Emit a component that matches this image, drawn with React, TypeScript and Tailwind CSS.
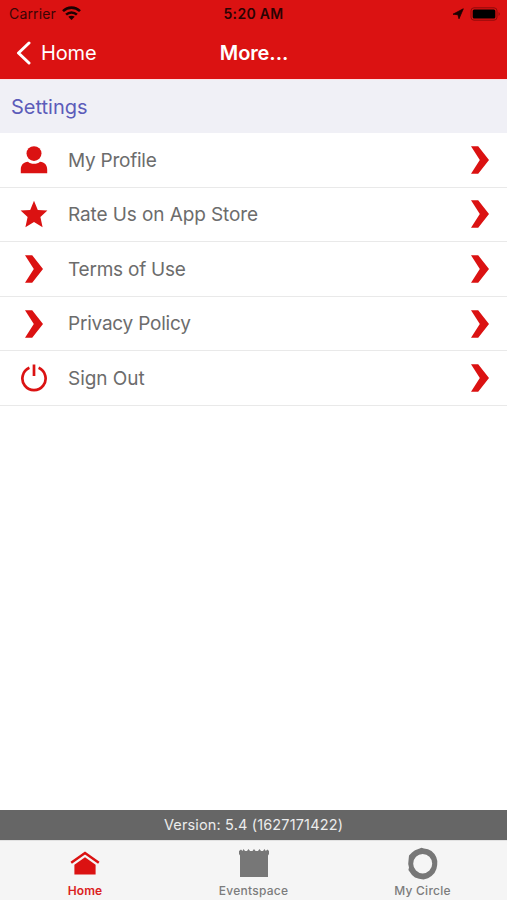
import type { ReactNode } from 'react';

interface SettingItem {
    label: string;
    icon: ReactNode;
    // letter spacing differs a little between the labels
    tracking: string;
}

const ChevronIcon = () => (
    <svg width="18" height="28" viewBox="0 0 18 28" fill="#db1212">
        <path d="M0 0.3H7.2L18 14L7.2 27.7H0L8.8 14Z" />
    </svg>
);

const UserIcon = () => (
    <svg width="28" height="28" viewBox="0 0 28 28" fill="#db1212">
        <ellipse cx="14" cy="7.6" rx="7.5" ry="7.4" />
        <path d="M0.8 27.2V23.5C0.8 19 3.4 16.2 8 15.8C9.6 17.2 11.4 17.8 14 17.8C16.6 17.8 18.4 17.2 20 15.8C24.6 16.2 27.2 19 27.2 23.5V27.2Z" />
    </svg>
);

const StarIcon = () => (
    <svg width="28" height="28" viewBox="0 0 28 28" fill="#db1212">
        <path d="M14 0.8L17.8 10L27.4 10.6L20.4 17.1L22.6 27.2L14 22.1L5.4 27.2L7.6 17.1L0.6 10.6L10.2 10Z" />
    </svg>
);

const PowerIcon = () => (
    <svg width="28" height="28" viewBox="0 0 28 28" fill="none" stroke="#db1212" strokeWidth="2.7">
        <path d="M9.4 3.8A11.6 11.6 0 1 0 18.6 3.8" />
        <path d="M14 0.5V12" />
    </svg>
);

const items: SettingItem[] = [
    { label: 'My Profile', icon: <UserIcon />, tracking: 'tracking-[-0.25px]' },
    { label: 'Rate Us on App Store', icon: <StarIcon />, tracking: 'tracking-[-0.1px]' },
    { label: 'Terms of Use', icon: <ChevronIcon />, tracking: 'tracking-[-0.22px]' },
    { label: 'Privacy Policy', icon: <ChevronIcon />, tracking: 'tracking-[-0.22px]' },
    { label: 'Sign Out', icon: <PowerIcon />, tracking: 'tracking-[-0.05px]' },
];

function StatusBar() {
    return (
        <div className="grid h-[27px] grid-cols-3 items-center px-[9px] text-[#3a0505]">
            <div className="flex items-center gap-[6px] text-[14px] tracking-[0.15px]">
                <span>Carrier</span>
                <svg className="-mt-px" width="19" height="14" viewBox="0 0 19 14" fill="none" stroke="#1c0202" strokeWidth="2.6">
                    <path d="M1 5.1C5.8 0.5 13.2 0.5 18 5.1" />
                    <path d="M4.1 8.6C7.2 5.7 11.8 5.7 14.9 8.6" />
                    <path d="M6.3 10.8C8.1 9.3 10.9 9.3 12.7 10.8L9.5 14Z" fill="#1c0202" stroke="none" />
                </svg>
            </div>
            <div className="text-center text-[14px] font-semibold tracking-[0.3px] text-[#2a0303]">5:20 AM</div>
            <div className="-mr-[3px] flex items-center justify-end gap-[6px]">
                <svg width="12" height="12" viewBox="0 0 12 12" fill="#1c0202" stroke="#1c0202" strokeWidth="0.8">
                    <path d="M11.3 0.8L7 10.8L5.9 6.7L1 6.2Z" />
                </svg>
                <svg width="31" height="14" viewBox="0 0 31 14">
                    <rect x="1" y="0.8" width="26" height="12.4" rx="3" fill="none" stroke="#8f0b0b" />
                    <rect x="2.7" y="2.5" width="22.6" height="9" rx="1.5" fill="#000" />
                    <path d="M28.6 5Q31 7 28.6 9Z" fill="#8f0b0b" />
                </svg>
            </div>
        </div>
    );
}

function NavBar() {
    return (
        <div className="grid h-[52px] grid-cols-3 items-center text-white">
            <div className="flex items-center gap-[10px] pl-[16px] text-[20px] tracking-[-0.15px]">
                <svg width="15" height="24" viewBox="0 0 15 24" fill="none" stroke="white" strokeWidth="3" strokeLinecap="round" strokeLinejoin="round">
                    <path d="M13 2L2.5 12L13 22" />
                </svg>
                <span>Home</span>
            </div>
            <h1 className="pl-px text-center text-[20px] font-semibold tracking-[-0.1px]">More...</h1>
        </div>
    );
}

function TabBar() {
    return (
        <nav className="grid h-[60px] grid-cols-3 border-t border-[#e2e2e2] bg-[#f5f5f5] text-[12px] font-medium text-[#7c7c7c]">
            <div className="flex flex-col items-center pl-[1px] text-[#db2222]">
                <svg className="mt-[10px]" width="30" height="26" viewBox="0 0 30 26">
                    <path d="M1.2 11.8L15 2L28.8 11.8" fill="none" stroke="#db1212" strokeWidth="2.5" />
                    <path d="M15 6.2L25.6 13.8V23.6H4.4V13.8Z" fill="#db1212" />
                </svg>
                <span className="mt-[5px] font-semibold tracking-[0.1px]">Home</span>
            </div>
            <div className="flex flex-col items-center">
                <svg className="mt-[7px]" width="32" height="30" viewBox="0 0 32 30" fill="#777">
                    <path d="M1 3L3 1.6L4.5 3L5.5 1L7 3H9L10.5 1L12 3H14.5L16 1L17.5 3H20L21.5 1L23 3H25L26.5 1L27.8 3L29.5 1.6L31 3V6L30 7.5V29H2V7.5L1 6Z" />
                </svg>
                <span className="mt-[4px] tracking-[0.25px]">Eventspace</span>
            </div>
            <div className="flex flex-col items-center">
                <svg className="mt-[6px]" width="32" height="34" viewBox="0 0 32 34" fill="#777" fillRule="evenodd">
                    <path d="M12 1.8L14.5 0.8L17 1.6L21 2.3L24.5 4L27.5 7L29.2 10L30.3 14L30.2 18L29.4 22L27.5 26L24.5 29L21 31.2L16.5 32.4L12 31.8L8 30.4L5 28L3.2 25.4L1.4 23L2 20.5L1.2 17L1.6 12.5L2 8.5L5 5.5L8 3.3ZM6.2 16.7A9.5 9.7 0 1 0 25.2 16.7A9.5 9.7 0 1 0 6.2 16.7Z" />
                </svg>
                <span className="mt-[1px] tracking-[0.25px]">My Circle</span>
            </div>
        </nav>
    );
}

export default function App() {
    return (
        <div className="flex h-[900px] w-[507px] flex-col overflow-hidden bg-white font-['Inter',sans-serif]">
            <header className="h-[79px] bg-[#db1212]">
                <StatusBar />
                <NavBar />
            </header>

            <h2 className="flex h-[54px] items-center border-t border-[#fbe3e6] bg-[#f0f0f6] pl-[11px] text-[20px] text-[#5c5cba]">
                Settings
            </h2>

            <ul className="flex-1">
                {items.map((item) => (
                    <li key={item.label} className="flex h-[54.6px] items-center border-b border-[#e9e9e9] pr-[18px]">
                        <div className="flex w-[68px] justify-center">{item.icon}</div>
                        <span className={`flex-1 pt-[2px] text-[19px] text-[#6c6c6c] ${item.tracking}`}>{item.label}</span>
                        <ChevronIcon />
                    </li>
                ))}
            </ul>

            <div className="flex h-[30px] items-center justify-center bg-[#666] pb-px text-[14.5px] tracking-[0.15px] text-[#ececec]">
                Version: 5.4 (1627171422)
            </div>
            <TabBar />
        </div>
    );
}
